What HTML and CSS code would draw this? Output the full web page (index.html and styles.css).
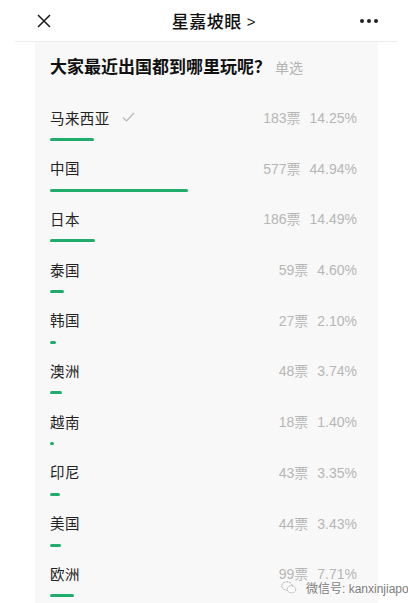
FILE: index.html
```html
<!DOCTYPE html>
<html lang="zh-CN">
<head>
  <meta charset="UTF-8" />
  <meta name="viewport" content="width=device-width, initial-scale=1.0" />
  <title>星嘉坡眼</title>
  <link rel="stylesheet" href="styles.css">
</head>
<body>
  <header class="topbar">
    <span class="close">
      <svg width="14" height="14" viewBox="0 0 14 14"><path d="M1 1L13 13M13 1L1 13" stroke="#1a1a1a" stroke-width="1.5" fill="none"/></svg>
    </span>
    <h2 class="title">星嘉坡眼<span class="chev">&gt;</span></h2>
    <span class="more"><i></i><i></i><i></i></span>
  </header>

  <main class="poll">
    <h1 class="question">大家最近出国都到哪里玩呢？<span class="kind">单选</span></h1>

    <div class="option">
      <div class="line">
        <span class="name">马来西亚</span>
        <svg class="tick" width="13" height="10" viewBox="0 0 13 10"><path d="M1 5.5L4.5 9L12 1" stroke="#b8b8b8" stroke-width="1.2" fill="none"/></svg>
        <span class="count">183票<em>14.25%</em></span>
      </div>
      <div class="track"><div class="bar" style="width:14.25%"></div></div>
    </div>
    <div class="option">
      <div class="line"><span class="name">中国</span><span class="count">577票<em>44.94%</em></span></div>
      <div class="track"><div class="bar" style="width:44.94%"></div></div>
    </div>
    <div class="option">
      <div class="line"><span class="name">日本</span><span class="count">186票<em>14.49%</em></span></div>
      <div class="track"><div class="bar" style="width:14.49%"></div></div>
    </div>
    <div class="option">
      <div class="line"><span class="name">泰国</span><span class="count">59票<em>4.60%</em></span></div>
      <div class="track"><div class="bar" style="width:4.60%"></div></div>
    </div>
    <div class="option">
      <div class="line"><span class="name">韩国</span><span class="count">27票<em>2.10%</em></span></div>
      <div class="track"><div class="bar" style="width:2.10%"></div></div>
    </div>
    <div class="option">
      <div class="line"><span class="name">澳洲</span><span class="count">48票<em>3.74%</em></span></div>
      <div class="track"><div class="bar" style="width:3.74%"></div></div>
    </div>
    <div class="option">
      <div class="line"><span class="name">越南</span><span class="count">18票<em>1.40%</em></span></div>
      <div class="track"><div class="bar" style="width:1.40%"></div></div>
    </div>
    <div class="option">
      <div class="line"><span class="name">印尼</span><span class="count">43票<em>3.35%</em></span></div>
      <div class="track"><div class="bar" style="width:3.35%"></div></div>
    </div>
    <div class="option">
      <div class="line"><span class="name">美国</span><span class="count">44票<em>3.43%</em></span></div>
      <div class="track"><div class="bar" style="width:3.43%"></div></div>
    </div>
    <div class="option">
      <div class="line"><span class="name">欧洲</span><span class="count">99票<em>7.71%</em></span></div>
      <div class="track"><div class="bar" style="width:7.71%"></div></div>
    </div>
  </main>

  <!-- watermark over the bottom corner -->
  <div class="watermark">
    <svg width="16" height="13" viewBox="0 0 16 13">
      <ellipse cx="6" cy="5" rx="5.2" ry="4.2" fill="none" stroke="#aaa" stroke-width="1" stroke-dasharray="2 1"/>
      <ellipse cx="10.5" cy="8.3" rx="4.3" ry="3.5" fill="#fff" stroke="#aaa" stroke-width="1" stroke-dasharray="2 1"/>
    </svg>
    <span>微信号: kanxinjiapo</span>
  </div>
</body>
</html>
```

FILE: styles.css
```css
* { box-sizing: border-box; margin: 0; padding: 0; }
body {
  font-family: "Liberation Sans", "Noto Sans CJK SC", sans-serif;
  background: #fff;
  color: #1a1a1a;
  width: 408px;
  height: 603px;
  overflow: hidden;
  position: relative;
}
.topbar {
  height: 42px;
  margin: 0 11px 0 15px;
  padding: 0 19px 0 22px;
  border-bottom: 1px solid #ececec;
  display: grid;
  grid-template-columns: 1fr auto 1fr;
  align-items: center;
}
.close { display: flex; }
.title {
  font-size: 17px;
  font-weight: 500;
  color: #111;
  padding-left: 13px;
  letter-spacing: 0.5px;
}
.chev {
  font-family: "Liberation Sans", sans-serif;
  font-weight: 400;
  font-size: 15px;
  margin-left: 5px;
  position: relative;
  top: -1px;
}
.more {
  justify-self: end;
  display: flex;
  gap: 3px;
}
.more i {
  width: 4px;
  height: 4px;
  border-radius: 50%;
  background: #222;
}
.poll {
  margin-left: 35px;
  width: 343px;
  height: 561px;
  background: #f8f8f8;
  padding: 14px 20px 0 15px;
}
.question {
  font-size: 17px;
  font-weight: 700;
  line-height: 24px;
  color: #111;
  margin-bottom: 27px;
}
.kind {
  font-size: 14px;
  font-weight: 400;
  color: #b4b4b4;
  margin-left: 4px;
}
.option { height: 50.7px; }
.line {
  display: flex;
  align-items: center;
  height: 20px;
  padding-right: 1px;
}
.name {
  font-size: 14.5px;
  color: #222;
  letter-spacing: 0.4px;
}
.tick { margin-left: 12px; }
.count {
  margin-left: auto;
  font-size: 14px;
  color: #b6b6b6;
}
.count em {
  font-style: normal;
  margin-left: 9px;
}
.track {
  margin-top: 11px;
  height: 3px;
  width: 308px;
}
.bar {
  height: 3px;
  border-radius: 2px;
  background: #20ad6b;
}
.watermark {
  position: absolute;
  left: 281px;
  top: 579px;
  display: flex;
  align-items: center;
  gap: 9px;
  white-space: nowrap;
  font-size: 12px;
  color: #7c7c7c;
  text-shadow: 0 0 2px #fff, 0 0 2px #fff;
}
```
